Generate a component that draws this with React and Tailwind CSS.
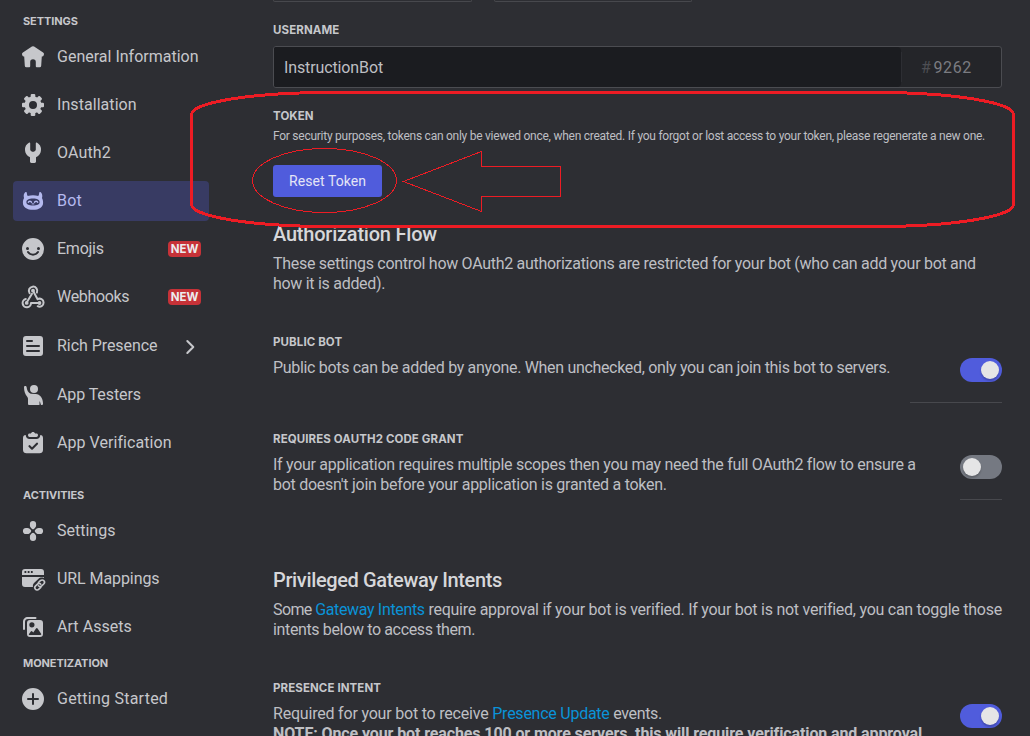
import React from "react";

const svgProps = { viewBox: "0 0 24 24", width: 24, height: 24, fill: "currentColor", className: "shrink-0" };

const HomeIcon = () => (
  <svg {...svgProps}>
    <path d="M10.9 1.6a2 2 0 0 1 2.2 0l9 5.9a1.8 1.8 0 0 1 .8 2.2l-.3.8a1.6 1.6 0 0 1-1.6 1h-.2l-.6 9.2a1.6 1.6 0 0 1-1.6 1.5h-2.9a.9.9 0 0 1-.9-.9V17a2.8 2.8 0 0 0-5.6 0v4.3a.9.9 0 0 1-.9.9H5.400a1.600 1.600 0 0 1-1.600-1.500L3.200 11.500H3a1.600 1.600 0 0 1-1.600-1l-.3-.8a1.800 1.800 0 0 1 .8-2.200z" />
  </svg>
);

const GearIcon = () => (
  <svg {...svgProps}>
    <circle cx="12" cy="12" r="6.2" fill="none" stroke="currentColor" strokeWidth="4.400" />
    {[0, 45, 90, 135].map((angle) => (
      <g key={angle} transform={`rotate(${angle} 12 12)`}>
        <rect x="9.700" y="1" width="4.600" height="4.500" rx="1.100" />
        <rect x="9.700" y="18.500" width="4.600" height="4.500" rx="1.100" />
      </g>
    ))}
  </svg>
);

const WrenchIcon = () => (
  <svg {...svgProps}>
    <path d="M9.200 2.200c0-.6-.5-.9-1-.7A8.300 8.300 0 0 0 4 9c0 3.200 1.900 6 5 7.200v4.400c0 .8.600 1.400 1.400 1.400h3.200c.8 0 1.400-.6 1.400-1.400v-4.400c3.100-1.200 5-4 5-7.200a8.300 8.300 0 0 0-4.200-7.500c-.5-.2-1 .1-1 .7v6.300c0 .5-.2.9-.6 1.200l-.9.7c-.7.500-1.900.5-2.600 0l-.9-.7c-.4-.3-.6-.7-.6-1.200z" />
  </svg>
);

const BotIcon = () => (
  <svg {...svgProps}>
    <path
      fillRule="evenodd"
      d="M4.600 3.100c.5-.4 1.200-.1 1.200.6 0 1.200.3 2.400.9 3.300 3.300-1 7.300-1 10.600 0 .6-.9.9-2.100.9-3.300 0-.7.700-1 1.200-.6 1.300 1 1.900 2.300 1.900 3.800 0 .8-.2 1.500-.4 2.200.8 1.200 1.200 2.800 1.200 4.600 0 4.600-4.200 7.100-10.100 7.100S1.900 18.300 1.900 13.700c0-1.800.4-3.400 1.200-4.600-.2-.7-.4-1.400-.4-2.200 0-1.500.6-2.800 1.900-3.800zM12 9.600c-4.200 0-6.600 1.200-6.600 3.600 0 2.300 2.400 3.300 6.600 3.300s6.600-1 6.600-3.300c0-2.400-2.400-3.600-6.600-3.600z"
    />
    <g fill="none" stroke="currentColor" strokeWidth="1.400" strokeLinecap="round">
      <path d="M7.300 13.300c.5-1.500 2.700-1.500 3.200 0" />
      <path d="M13.500 13.300c.5-1.500 2.700-1.500 3.200 0" />
      <path d="M11.100 14.900h1.800" strokeWidth="1" />
    </g>
  </svg>
);

const SmileIcon = () => (
  <svg {...svgProps}>
    <path
      fillRule="evenodd"
      d="M12 23a11 11 0 1 0 0-22 11 11 0 0 0 0 22zM6.500 13a1.500 1.500 0 1 0 0-3 1.500 1.500 0 0 0 0 3zm11 0a1.500 1.500 0 1 0 0-3 1.500 1.500 0 0 0 0 3zm-9.670 1.440a1 1 0 0 0-1.660 1.120 7 7 0 0 0 11.660 0 1 1 0 1 0-1.660-1.120 5 5 0 0 1-8.340 0z"
    />
  </svg>
);

const WebhookIcon = () => (
  <svg {...svgProps} fill="none" stroke="currentColor" strokeWidth="2" strokeLinecap="round" strokeLinejoin="round">
    <path d="M8.600 8.200a4.200 4.200 0 1 1 7.300-.7" />
    <path d="M12 5.800 16.600 14.200a4 4 0 1 1 .1 7" />
    <path d="M18.600 18H10a4.200 4.200 0 1 1-5.200-4" />
    <path d="M5.500 17.800 11 8.800" />
    <g fill="currentColor" stroke="none">
      <circle cx="12" cy="5.700" r="1.900" />
      <circle cx="5.700" cy="17.900" r="1.900" />
      <circle cx="18.500" cy="18" r="1.900" />
    </g>
  </svg>
);

const RichIcon = () => (
  <svg {...svgProps}>
    <path
      fillRule="evenodd"
      d="M5 2a3 3 0 0 0-3 3v14a3 3 0 0 0 3 3h14a3 3 0 0 0 3-3V5a3 3 0 0 0-3-3zm1 4h5a1 1 0 1 1 0 2H6a1 1 0 0 1 0-2zm0 5h12a1 1 0 1 1 0 2H6a1 1 0 0 1 0-2zm0 5h12a1 1 0 1 1 0 2H6a1 1 0 0 1 0-2z"
    />
  </svg>
);

const TesterIcon = () => (
  <svg {...svgProps}>
    <circle cx="13" cy="6" r="4" />
    <path d="M3 4.100c0-.7.600-1.100 1.300-1.100.7 0 1.200.4 1.300 1.100.3 3.300 1.600 5.900 4.200 6.600l5 .2c4.200.3 7.200 4.200 7.200 9.300v.8a1 1 0 0 1-1 1h-.7a.5.500 0 0 1-.5-.4l-.8-2.900c-.1-.4-.5-.3-.5.1v2.600a.6.600 0 0 1-.6.600H8a1 1 0 0 1-1-1v-5.200c0-.8-.3-1.500-.8-2.100C4.100 11.500 3 8.400 3 4.100z" />
  </svg>
);

const VerifyIcon = () => (
  <svg {...svgProps}>
    <path d="M9.800 2.500C10.200 1.600 11 1 12 1s1.800.6 2.200 1.500h1.300c.8 0 1.500.7 1.500 1.500 0 1.100-.7 2-1.500 2h-7C7.700 6 7 5.100 7 4c0-.8.700-1.500 1.500-1.500z" />
    <path
      fillRule="evenodd"
      d="M4.700 4C3 4 2 5.200 2 7v12a3.500 3.500 0 0 0 3.500 3.200h13A3.500 3.500 0 0 0 22 19V7c0-1.800-1-3-2.700-3-.2 2.400-1.700 4-3.800 4h-7c-2.100 0-3.600-1.600-3.800-4zm12.200 9.200a1 1 0 0 0-1.400-1.400L11 16.300l-2-2a1 1 0 0 0-1.400 1.400l2.700 2.700a1 1 0 0 0 1.400 0z"
    />
  </svg>
);

const PadIcon = () => (
  <svg {...svgProps}>
    {[0, 90, 180, 270].map((angle) => (
      <path
        key={angle}
        transform={`rotate(${angle} 12 12)`}
        d="M12 1.900c2 0 3.100 1.200 3.100 3v1.600c0 1.500-1 2.300-1.900 3.200-.7.700-1.700.7-2.400 0-.9-.9-1.900-1.700-1.900-3.200V4.900c0-1.800 1.100-3 3.100-3z"
      />
    ))}
  </svg>
);

const UrlIcon = () => (
  <svg {...svgProps} overflow="visible">
    <path
      fillRule="evenodd"
      d="M4 2a3 3 0 0 0-3 3v3h22V5a3 3 0 0 0-3-3zm-.5 2.100h1.800v1.800H3.500zm3.200 0h1.800v1.800H6.700zm3.200 0h1.800v1.800H9.900z"
    />
    <path d="M1 10h22v1c-2-.8-4.200-.4-5.700 1l-4 3.700c-1.300 1.200-1.700 2.900-1.300 4.300H4a3 3 0 0 1-3-3z" />
    <g fill="none" stroke="currentColor" strokeWidth="1.600" strokeLinecap="round">
      <path d="M17.400 15.500 19.400 13.700c1.200-1.100 2.700-.9 3.500 0s.8 2.300-.2 3.300l-2 1.900c-1 .9-2.400.8-3.300-.1" />
      <path d="M19.800 20.400 17.900 22.200c-1.200 1.100-2.700.9-3.500 0s-.8-2.300.2-3.300l1.900-1.800c1-.9 2.400-.8 3.300.1" />
    </g>
  </svg>
);

const ArtIcon = () => (
  <svg {...svgProps}>
    <path d="M2 14a1 1 0 0 0 2 0V7c0-2 1-3 3-3h7.500a1 1 0 1 0 0-2H7C4 2 2 4 2 7z" />
    <path
      fillRule="evenodd"
      d="M9 5a3 3 0 0 0-3 3v11a3 3 0 0 0 3 3h10a3 3 0 0 0 3-3V8a3 3 0 0 0-3-3zm4.500 4.800a2.600 2.600 0 1 1-5.200 0 2.600 2.600 0 0 1 5.200 0zM8.600 20a.7.7 0 0 1-.6-1.100l1.800-2.400a1 1 0 0 1 1.500-.1l1 1 2.700-3.800a1 1 0 0 1 1.600 0l3.500 5.200a.8.8 0 0 1-.6 1.200z"
    />
  </svg>
);

const PlusIcon = () => (
  <svg {...svgProps}>
    <path
      fillRule="evenodd"
      d="M12 23a11 11 0 1 0 0-22 11 11 0 0 0 0 22zm0-17a1 1 0 0 1 1 1v4h4a1 1 0 1 1 0 2h-4v4a1 1 0 1 1-2 0v-4H7a1 1 0 1 1 0-2h4V7a1 1 0 0 1 1-1z"
    />
  </svg>
);

function NavItem({ icon: Icon, label, active, badge, chevron, tracking = "tracking-normal" }) {
  return (
    <a
      className={`flex w-[196px] shrink-0 items-center rounded pl-2 pr-2 ${chevron ? "h-[42px]" : "h-10"} ${
        active ? "bg-[#383b63] text-[#b4b9ee]" : "text-[#c6c7cb]"
      }`}
    >
      <Icon />
      <span className={`ml-3 whitespace-nowrap text-base leading-5 ${tracking}`}>{label}</span>
      {badge && (
        <span className="ml-auto flex h-4 w-[33px] items-center justify-center rounded bg-[#c63238] font-['Inter',sans-serif] text-[11.5px] font-bold leading-4 text-[#ececee]">
          NEW
        </span>
      )}
      {chevron && (
        <svg viewBox="0 0 24 24" width="24" height="24" className="ml-auto mr-[-1px] translate-y-px" fill="none" stroke="currentColor" strokeWidth="2" strokeLinecap="round" strokeLinejoin="round">
          <path d="M9.300 6 15.300 12 9.300 18" />
        </svg>
      )}
    </a>
  );
}

const NavHeading = ({ children, className = "" }) => (
  <h2
    className={`ml-[10px] h-4 shrink-0 font-['Inter',sans-serif] text-[11px] font-bold leading-4 tracking-[-0.08px] text-[#c6c7cb] ${className}`}
  >
    {children}
  </h2>
);

const Label = ({ children, className = "" }) => (
  <h3 className={`h-4 font-['Inter',sans-serif] text-[11.5px] font-bold leading-4 tracking-[0.1px] text-[#c6c7cb] ${className}`}>
    {children}
  </h3>
);

const Title = ({ children, className = "" }) => (
  <h2 className={`h-6 text-xl font-medium leading-6 text-[#d6d7da] ${className}`}>{children}</h2>
);

const Body = ({ children, className = "tracking-[-0.29px]" }) => (
  <p className={`whitespace-nowrap text-base leading-5 text-[#bebfc3] ${className}`}>{children}</p>
);

const Link = ({ children, className = "" }) => <a className={`text-[#0a93d8] ${className}`}>{children}</a>;

const Toggle = ({ on }) => (
  <span className={`flex h-6 w-[42px] shrink-0 items-center rounded-full px-[3px] ${on ? "justify-end bg-[#505cdc]" : "bg-[#757982]"}`}>
    <span className="h-[18px] w-[18px] rounded-full bg-[#e5e5e6] shadow-[0_2px_2px_rgba(0,0,0,0.2)]" />
  </span>
);

function Annotations() {
  return (
    <svg
      className="pointer-events-none absolute left-0 top-0"
      width="1030"
      height="736"
      fill="none"
      stroke="#ed1c24"
      shapeRendering="crispEdges"
    >
      <rect x="191.500" y="92.500" width="822" height="134" rx="137" ry="22" strokeWidth="3" />
      <ellipse cx="324.500" cy="180.500" rx="72" ry="32" />
      <path d="M403.500 181.500 481.500 151.500V166.500H560.500V196.500H481.500V211.500Z" />
    </svg>
  );
}

export default function App() {
  return (
    <div className="relative flex h-[736px] w-[1030px] overflow-hidden bg-[#2d2e33] font-['Roboto','Noto_Sans',sans-serif]">
      <nav className="flex w-[273px] shrink-0 flex-col gap-2 pl-[13px] pt-[13px]">
        <NavHeading>SETTINGS</NavHeading>
        <NavItem icon={HomeIcon} label="General Information" />
        <NavItem icon={GearIcon} label="Installation" tracking="tracking-[0.06px]" />
        <NavItem icon={WrenchIcon} label="OAuth2" tracking="tracking-[0.15px]" />
        <NavItem icon={BotIcon} label="Bot" active tracking="tracking-[0.2px]" />
        <NavItem icon={SmileIcon} label="Emojis" badge tracking="tracking-[-0.25px]" />
        <NavItem icon={WebhookIcon} label="Webhooks" badge tracking="tracking-[-0.32px]" />
        <NavItem icon={RichIcon} label="Rich Presence" chevron tracking="tracking-[-0.05px]" />
        <NavItem icon={TesterIcon} label="App Testers" tracking="tracking-[-0.1px]" />
        <NavItem icon={VerifyIcon} label="App Verification" tracking="tracking-[0.06px]" />
        <NavHeading className="mt-4">ACTIVITIES</NavHeading>
        <NavItem icon={PadIcon} label="Settings" />
        <NavItem icon={UrlIcon} label="URL Mappings" tracking="tracking-[-0.08px]" />
        <NavItem icon={ArtIcon} label="Art Assets" tracking="tracking-[0.05px]" />
        <NavHeading>MONETIZATION</NavHeading>
        <NavItem icon={PlusIcon} label="Getting Started" tracking="tracking-[0.24px]" />
      </nav>

      <main className="w-[729px] shrink-0">
        <div className="flex h-[2px] gap-[22px]">
          <div className="w-[199px] rounded-b border border-t-0 border-[#47484d]" />
          <div className="w-[198px] rounded-b border border-t-0 border-[#47484d]" />
        </div>

        <Label className="mt-5">USERNAME</Label>
        <div className="mt-2 flex h-[42px] items-center rounded-[3px] border border-[#4b4c51] bg-[#242529]">
          <div className="flex h-full w-[627px] items-center rounded-l-[2px] rounded-r bg-[#1b1c20] pl-[10px] pt-[2px] text-base leading-5 tracking-[-0.12px] text-[#bebfc3]">
            InstructionBot
          </div>
          <div className="flex h-[30px] flex-1 items-center border-l border-[#2d2e33] pl-[19px] pt-[2px] text-base leading-5 tracking-[0.6px] text-[#7b7c81]">
            <span className="mr-[2px] text-[#4d4e53]">#</span>9262
          </div>
        </div>

        <Label className="mt-5">TOKEN</Label>
        <p className="mt-1 whitespace-nowrap text-xs leading-4 tracking-[-0.256px] text-[#bebfc3]">
          For security purposes, tokens can only be viewed once, when created. If you forgot or lost access to your token, please
          regenerate a new one.
        </p>
        <button className="mt-[21px] flex h-8 w-[109px] items-center justify-center rounded-[3px] bg-[#505cdc] text-sm leading-4 tracking-[0.07px] text-[#e4e5f6]">
          Reset Token
        </button>

        <Title className="mt-[25px] tracking-[-0.22px]">Authorization Flow</Title>
        <Body className="mt-2 tracking-[-0.29px]">
          These settings control how OAuth2 authorizations are restricted for your bot (who can add your bot and
          <br />
          how it is added).
        </Body>

        <section className="mt-10">
          <Label>PUBLIC BOT</Label>
          <div className="mt-2 flex h-6 items-start justify-between">
            <Body className="tracking-[-0.32px]">Public bots can be added by anyone. When unchecked, only you can join this bot to servers.</Body>
            <Toggle on />
          </div>
          <div className="ml-auto mt-5 h-px w-[92px] bg-[#47484d]" />
        </section>

        <section className="mt-7">
          <Label>REQUIRES OAUTH2 CODE GRANT</Label>
          <div className="mt-2 flex h-10 items-start justify-between">
            <Body>
              If your application requires multiple scopes then you may need the full OAuth2 flow to ensure a
              <br />
              <span className="tracking-[-0.27px]">bot doesn't join before your application is granted a token.</span>
            </Body>
            <Toggle />
          </div>
          <div className="ml-auto mt-1 h-px w-[42px] bg-[#47484d]" />
        </section>

        <Title className="mt-[68px] tracking-[-0.36px]">Privileged Gateway Intents</Title>
        <Body className="mt-2 tracking-[-0.26px]">
          <span className="tracking-[-0.6px]">Some </span>
          <Link className="tracking-[-0.34px]">Gateway Intents</Link> require approval if your bot is verified. If your bot is not
          verified, you can toggle those
          <br />
          <span className="tracking-[-0.36px]">intents below to access them.</span>
        </Body>

        <section className="mt-10">
          <Label>PRESENCE INTENT</Label>
          <div className="mt-2 flex items-start justify-between">
            <Body className="tracking-[-0.2px]">
              Required for your bot to receive <Link className="tracking-[-0.25px]">Presence Update</Link>
              <span className="tracking-[-0.35px]"> events.</span>
              <br />
              <strong className="font-bold tracking-[-0.11px]">
                NOTE: Once your bot reaches 100 or more servers, this will require verification and approval
              </strong>
            </Body>
            <Toggle on />
          </div>
        </section>
      </main>

      <Annotations />
    </div>
  );
}
